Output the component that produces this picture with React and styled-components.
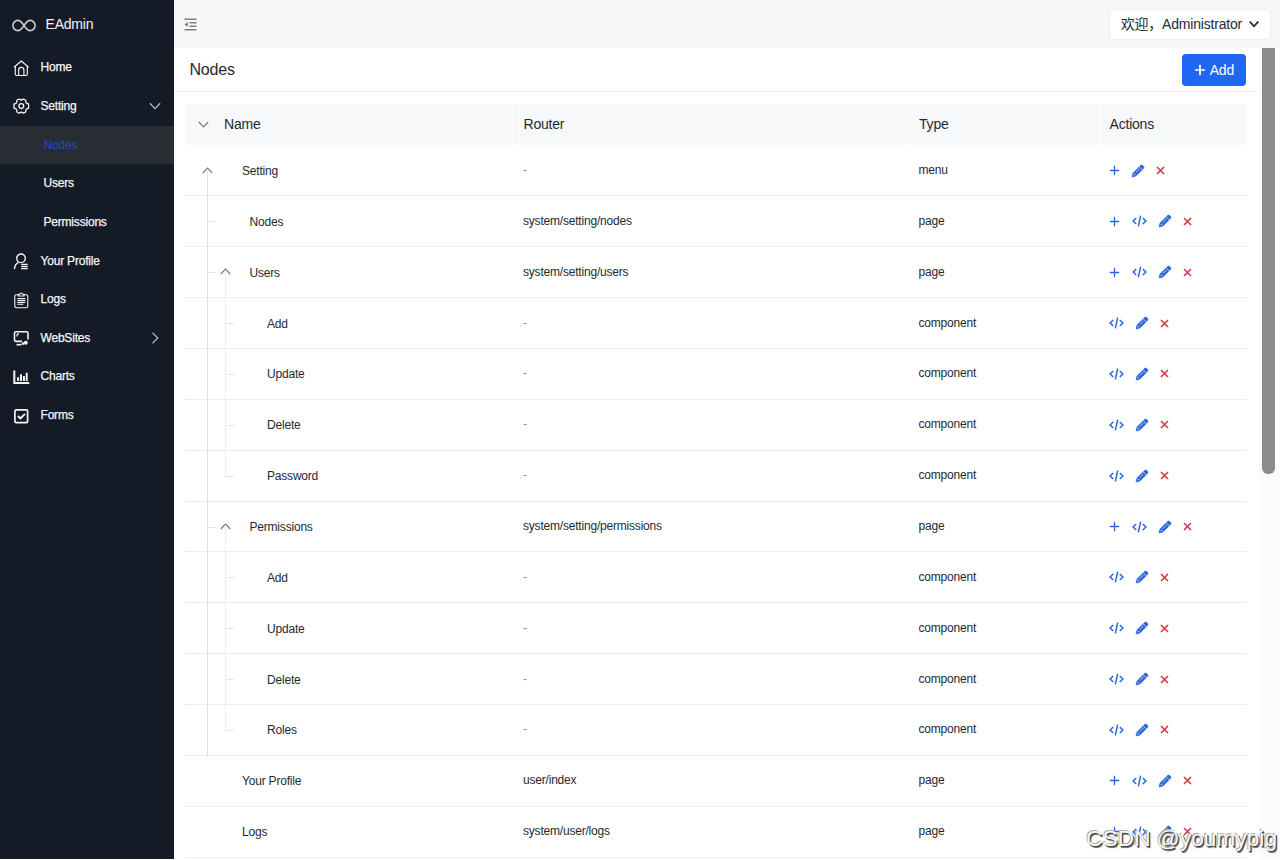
import styled, { createGlobalStyle, css } from 'styled-components'
import { FaPencil } from 'react-icons/fa6'

const GlobalStyle = createGlobalStyle`
	* {
		box-sizing: border-box;
	}
	body {
		margin: 0;
		overflow: hidden;
		background: #fff;
		color: #252a31;
		font-family: 'Liberation Sans', Arial, 'Noto Sans CJK SC', sans-serif;
		font-size: 12px;
		letter-spacing: -0.2px;
	}
	svg {
		display: block;
		flex: none;
	}
`

const Layout = styled.div`
	display: flex;
	height: 860px;
	padding-bottom: 1px;
`

const Sidebar = styled.nav`
	flex: none;
	width: 174px;
	background: #141a26;
	color: #f4f5f7;
`

const Brand = styled.div`
	display: flex;
	align-items: center;
	gap: 9.5px;
	height: 48px;
	padding-left: 12px;
	font-size: 14px;
	svg {
		margin-top: 2px;
	}
`

const MenuItem = styled.div`
	display: flex;
	align-items: center;
	height: 38.65px;
	padding: 0 13px;
	-webkit-text-stroke: 0.25px currentColor;
	&:nth-child(2) {
		margin-top: 0.5px;
	}
	${(props) =>
		props.$child &&
		css`
			padding-left: 43.5px;
		`}
	${(props) =>
		props.$active &&
		css`
			background: #282c33;
			color: #1d4fc4;
			-webkit-text-stroke: 0;
		`}
`

const MenuIcon = styled.span`
	width: 27.5px;
	padding-top: 1px;
`

const MenuLabel = styled.span`
	flex: 1;
	padding-bottom: 1px;
`

const Main = styled.main`
	flex: 1;
	display: flex;
	flex-direction: column;
	min-width: 0;
`

const Topbar = styled.header`
	flex: none;
	display: flex;
	align-items: center;
	justify-content: space-between;
	height: 48px;
	padding: 0 9px 0 10px;
	background: #f6f7f9;
	color: #7c7f84;
`

const UserButton = styled.div`
	display: flex;
	align-items: center;
	gap: 7px;
	height: 31px;
	padding: 0 11px;
	border: 1px solid #eceef0;
	border-radius: 4px;
	background: #fff;
	color: #252a31;
	font-size: 14px;
	white-space: nowrap;
`

const UserName = styled.span`
	padding-bottom: 2px;
`

const Body = styled.div`
	flex: 1;
	display: flex;
	min-height: 0;
`

const Page = styled.section`
	flex: 1;
	overflow: hidden;
`

const PageHeader = styled.div`
	display: flex;
	align-items: center;
	justify-content: space-between;
	height: 44px;
	padding: 0 12px 0 15.5px;
	border-bottom: 1px solid #eff0f1;
`

const Title = styled.h1`
	margin: 0;
	font-size: 16px;
	font-weight: 400;
`

const AddButton = styled.button`
	display: flex;
	align-items: center;
	gap: 4px;
	height: 32px;
	padding: 0 12px;
	border: 0;
	border-radius: 4px;
	background: #2165f3;
	color: #fff;
	font: 14px 'Liberation Sans', Arial, sans-serif;
	letter-spacing: -0.2px;
`

const Scrollbar = styled.div`
	flex: none;
	width: 22px;
	padding-left: 4px;
	background: #fcfcfc;
`

const Thumb = styled.div`
	width: 13px;
	height: 426px;
	border-radius: 0 0 6px 6px;
	background: #8b8b8b;
`

const Table = styled.div`
	width: 1061px;
	margin: 12px 0 0 11px;
`

const columns = css`
	display: grid;
	grid-template-columns: 328px 395.5px 190.5px 1fr;
`

const HeadRow = styled.div`
	${columns}
	height: 41px;
	margin-bottom: 0.6px;
	border-radius: 4px 4px 0 0;
	background: #f7f8fa;
	font-size: 14px;
`

const HeadCell = styled.div`
	display: flex;
	align-items: center;
	padding: 0 0 1px 9.5px;
	border-left: 1px solid #fdfdfe;
	&:first-child {
		gap: 15px;
		padding-left: 13px;
		border-left: 0;
	}
`

const Row = styled.div`
	${columns}
	height: 50.87px;
	border-bottom: 1px solid #ededee;
`

const Cell = styled.div`
	display: flex;
	align-items: center;
	padding: 0 0 1px 10px;
`

const Dash = styled.span`
	color: #8b9097;
`

const NameCell = styled.div`
	display: flex;
	padding-left: 14px;
`

const Name = styled.span`
	align-self: center;
	padding-top: 1px;
	padding-left: ${(props) => (props.$root ? 25.5 : 15.5)}px;
`

/* One indent step of the tree: a vertical line in its middle, and a tick towards the label */
const Guide = styled.span`
	position: relative;
	width: 17.5px;
	margin-bottom: -1px;
	&::before {
		content: '';
		position: absolute;
		left: 8px;
		top: ${(props) => (props.$from === 'middle' ? '25px' : 0)};
		bottom: ${(props) => (props.$to === 'middle' ? '25px' : 0)};
		border-left: 1px solid ${(props) => (props.$deep ? '#ececef' : '#dedfe2')};
		${(props) => props.$hidden && 'display: none;'}
	}
	&::after {
		content: '';
		position: absolute;
		left: 9px;
		top: 25px;
		width: 8px;
		border-top: 1px solid #e6e6e9;
		${(props) => !props.$tick && 'display: none;'}
	}
	svg {
		position: absolute;
		left: 3px;
		top: 19px;
	}
`

const Actions = styled.div`
	display: flex;
	align-items: center;
	gap: 12px;
	padding: 0 0 0 9.5px;
	color: #2b65d9;
`

const Pencil = styled(FaPencil)`
	stroke: currentColor;
	stroke-width: 22px;
	overflow: visible;
`

const Watermark = styled.div`
	position: absolute;
	right: 3px;
	bottom: 8px;
	color: #f7f7f7;
	font-size: 22.7px;
	letter-spacing: 0;
	line-height: 28px;
	text-shadow: -1px -1px 0.5px #aaa, 1px 1px 0.5px #444, 1.5px 1.5px 1px #666;
	white-space: nowrap;
`

function Chevron({ dir = 'down', size = 11, width = 1.1, color = 'currentColor' }) {
	const d = {
		down: 'M.8 3 5.5 8 10.2 3',
		up: 'M.8 8 5.5 3 10.2 8',
		right: 'M3.2.5 8 5.5 3.2 10.5',
	}[dir]
	return (
		<svg width={size} height={size} viewBox="0 0 11 11" fill="none" stroke={color} strokeWidth={width}>
			<path d={d} />
		</svg>
	)
}

function Icon({ children, ...props }) {
	return (
		<svg
			width="17"
			height="17"
			viewBox="0 0 17 17"
			fill="none"
			stroke="currentColor"
			strokeWidth="1.15"
			strokeLinejoin="round"
			{...props}
		>
			{children}
		</svg>
	)
}

const Infinity = () => (
	<svg width="24" height="13" viewBox="0 0 24 13" fill="none" stroke="#c9ccd3" strokeWidth="1.6">
		<path d="M12 6.5C10 3.7 8.5 1.4 6 1.4a5.1 5.1 0 0 0 0 10.2c2.5 0 4-2.3 6-5.1s3.5-5.1 6-5.1a5.1 5.1 0 0 1 0 10.2c-2.5 0-4-2.3-6-5.1z" />
	</svg>
)

const Fold = () => (
	<svg width="13" height="13" viewBox="0 0 13 13" fill="currentColor">
		<path d="M.5.5h12V2H.5zM5.500 4h7v1.500h-7zM5.500 7.500h7V9h-7zM.5 11h12v1.500H.5zM.5 6.500 3.800 4v5z" />
	</svg>
)

const Home = () => (
	<Icon>
		<path d="M1 7.300 8.300 1l7.300 6.300M2.300 6.500v7.600q0 1.400 1.400 1.400h9.200q1.400 0 1.400-1.400V6.500M5.700 15.500V10a2.600 2.600 0 0 1 5.200 0v5.500" />
	</Icon>
)

const Gear = () => (
	<Icon strokeWidth="1.3">
		<path d="M5.700 1.200q1.300 0 2.600 1.100 1.300-1.100 2.600-1.100l1.800 1q-.1 1.700.5 2.700 1 .8 2.400 1.100v4.200q-1.400.3-2.400 1.100-.6 1-.5 2.700l-1.800 1q-1.300 0-2.600-1.100-1.300 1.100-2.600 1.100l-1.800-1q.1-1.700-.5-2.700-1-.8-2.400-1.100V6q1.400-.3 2.400-1.100.6-1 .5-2.700z" />
		<circle cx="8.300" cy="8.100" r="2.400" />
	</Icon>
)

const Profile = () => (
	<Icon strokeWidth="1.4">
		<circle cx="8" cy="5.300" r="4.300" />
		<path d="M1.500 16c.2-3.500 1.500-5.500 4-6.700M8.200 11.400h6.500M8.200 13.500h6.500M8.200 15.600h6.500" />
	</Icon>
)

const Clipboard = () => (
	<Icon strokeWidth="1.1">
		<path d="M5.500 2.700H3.400q-1.600 0-1.600 1.600V14q0 1.700 1.600 1.700h9.800q1.600 0 1.600-1.700V4.300q0-1.600-1.600-1.600h-2.100M5.500 4V2.400h1.300Q7.400 1 8.300 1t1.500 1.400h1.300V4zM4.300 6.600h8M4.300 8.500h8M4.300 10.400h8M4.300 12.300h6" />
	</Icon>
)

const Monitor = () => (
	<Icon strokeWidth="1.6">
		<path d="M9 11.400H3Q1.500 11.400 1.500 10V3.200Q1.500 1.800 3 1.800h10.500Q15 1.800 15 3.200v6.300" />
		<path d="M4 4.200v2.300M4 4.200h2" strokeWidth="1.2" />
		<path d="M3.500 14.700h5" />
		<circle cx="12.800" cy="12.700" r="2" fill="currentColor" stroke="none" />
		<circle cx="10.200" cy="13.600" r="1.400" fill="currentColor" stroke="none" />
	</Icon>
)

const Chart = () => (
	<Icon strokeWidth="2" strokeLinejoin="miter">
		<path d="M1.300 1.500v12.600h15" />
		<path d="M5.100 12V8.200M8 12V5.200M10.900 12V7M13.700 12V3.800" />
	</Icon>
)

const Checkbox = () => (
	<Icon strokeWidth="1.7">
		<rect x="1.900" y="1.900" width="12.700" height="12.700" rx="1.200" />
		<path d="m4.900 8 2.500 2.500L12 5.800" strokeWidth="1.9" />
	</Icon>
)

const Plus = ({ size = 11, width = 1.3 }) => (
	<svg width={size} height={size} viewBox="0 0 11 11" stroke="currentColor" strokeWidth={width}>
		<path d="M5.500.8v9.400M.8 5.500h9.400" />
	</svg>
)

const Code = () => (
	<svg width="15" height="12" viewBox="0 0 15 12" fill="none" stroke="currentColor" strokeWidth="1.5">
		<path d="M4.200 3 1.100 6l3.100 3M10.800 3l3.100 3-3.100 3M8.700.6 6.300 11.400" />
	</svg>
)

const Cross = () => (
	<svg width="9" height="9" viewBox="0 0 9 9" stroke="#cf3a48" strokeWidth="1.6">
		<path d="m1 1 7 7M8 1 1 8" />
	</svg>
)

const menu = [
	{ label: 'Home', icon: <Home /> },
	{ label: 'Setting', icon: <Gear />, arrow: 'down' },
	{ label: 'Nodes', child: true, active: true },
	{ label: 'Users', child: true },
	{ label: 'Permissions', child: true },
	{ label: 'Your Profile', icon: <Profile /> },
	{ label: 'Logs', icon: <Clipboard /> },
	{ label: 'WebSites', icon: <Monitor />, arrow: 'right' },
	{ label: 'Charts', icon: <Chart /> },
	{ label: 'Forms', icon: <Checkbox /> },
]

const nodes = [
	{ name: 'Setting', type: 'menu', depth: 0, open: true },
	{ name: 'Nodes', router: 'system/setting/nodes', type: 'page', depth: 1 },
	{ name: 'Users', router: 'system/setting/users', type: 'page', depth: 1, open: true },
	{ name: 'Add', type: 'component', depth: 2 },
	{ name: 'Update', type: 'component', depth: 2 },
	{ name: 'Delete', type: 'component', depth: 2 },
	{ name: 'Password', type: 'component', depth: 2, last: true },
	{ name: 'Permissions', router: 'system/setting/permissions', type: 'page', depth: 1, open: true },
	{ name: 'Add', type: 'component', depth: 2 },
	{ name: 'Update', type: 'component', depth: 2 },
	{ name: 'Delete', type: 'component', depth: 2 },
	{ name: 'Roles', type: 'component', depth: 2, last: true },
	{ name: 'Your Profile', router: 'user/index', type: 'page', depth: 0 },
	{ name: 'Logs', router: 'system/user/logs', type: 'page', depth: 0 },
]

function NodeRow({ node }) {
	const { name, router, type, depth, open, last } = node
	return (
		<Row>
			<NameCell>
				{depth > 0 && <Guide $tick={depth === 1} />}
				{depth > 1 && <Guide $deep $tick $to={last ? 'middle' : 'end'} />}
				{depth < 2 && (
					<Guide $from="middle" $deep={depth === 1} $hidden={!open}>
						{open && <Chevron dir="up" color="#777" />}
					</Guide>
				)}
				{depth === 2 && <Guide $hidden />}
				<Name $root={depth === 0}>{name}</Name>
			</NameCell>
			<Cell>{router || <Dash>-</Dash>}</Cell>
			<Cell>{type}</Cell>
			<Actions>
				{type !== 'component' && <Plus />}
				{type !== 'menu' && <Code />}
				<Pencil size={12} />
				<Cross />
			</Actions>
		</Row>
	)
}

export default function App() {
	return (
		<>
			<GlobalStyle />
			<Layout>
				<Sidebar>
					<Brand>
						<Infinity />
						EAdmin
					</Brand>
					{menu.map((item) => (
						<MenuItem key={item.label} $child={item.child} $active={item.active}>
							{item.icon && <MenuIcon>{item.icon}</MenuIcon>}
							<MenuLabel>{item.label}</MenuLabel>
							{item.arrow && <Chevron dir={item.arrow} size={12} color="#b9bcc2" />}
						</MenuItem>
					))}
				</Sidebar>
				<Main>
					<Topbar>
						<Fold />
						<UserButton>
							<UserName>欢迎，Administrator</UserName>
							<Chevron size={10} width={2} />
						</UserButton>
					</Topbar>
					<Body>
						<Page>
							<PageHeader>
								<Title>Nodes</Title>
								<AddButton>
									<Plus size={12} width={1.6} />
									Add
								</AddButton>
							</PageHeader>
							<Table>
								<HeadRow>
									<HeadCell>
										<Chevron color="#777" />
										Name
									</HeadCell>
									<HeadCell>Router</HeadCell>
									<HeadCell>Type</HeadCell>
									<HeadCell>Actions</HeadCell>
								</HeadRow>
								{nodes.map((node, i) => (
									<NodeRow key={i} node={node} />
								))}
							</Table>
						</Page>
						<Scrollbar>
							<Thumb />
						</Scrollbar>
					</Body>
				</Main>
			</Layout>
			<Watermark>CSDN @youmypig</Watermark>
		</>
	)
}
